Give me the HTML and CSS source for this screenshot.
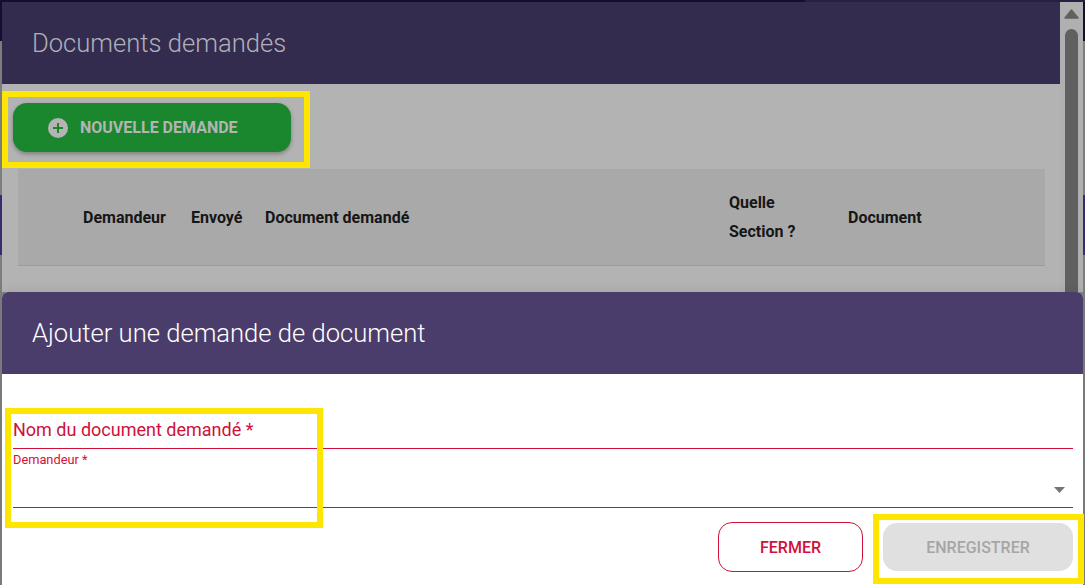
FILE: index.html
```html
<!DOCTYPE html>
<html>
<head>
    <meta charset="utf-8">
    <title>Documents demandés</title>
    <link rel="stylesheet" href="styles.css">
</head>
<body>
    <div class="sheet-back">
        <div class="back-main">
            <h2 class="back-title">Documents demandés</h2>
            <div class="back-content">
                <button class="btn-new">
                    <svg class="plus" viewBox="0 0 20 20" width="20" height="20">
                        <circle cx="10" cy="10" r="10" fill="#b4b4b4"/>
                        <path d="M10 5v10M5 10h10" stroke="#1a872e" stroke-width="2"/>
                    </svg>
                    <span>NOUVELLE DEMANDE</span>
                </button>
                <div class="table-head">
                    <span></span>
                    <span>Demandeur</span>
                    <span>Envoyé</span>
                    <span>Document demandé</span>
                    <span>Quelle<br>Section ?</span>
                    <span>Document</span>
                </div>
            </div>
        </div>
        <div class="scrollbar">
            <svg class="scroll-up" viewBox="0 0 15 10" width="15" height="10">
                <path d="M7.5 1L14 9H1z" fill="#606060" stroke="#606060" stroke-width="1.5" stroke-linejoin="round"/>
            </svg>
            <div class="scroll-thumb"></div>
        </div>
    </div>

    <div class="sheet-front">
        <h2 class="front-title">Ajouter une demande de document</h2>
        <div class="form">
            <div class="field-name">Nom du document demandé *</div>
            <div class="field-select">
                <label>Demandeur *</label>
                <svg class="caret" viewBox="0 0 11 6" width="11" height="6"><path d="M0 0h11L5.5 6z" fill="#757575"/></svg>
            </div>
            <div class="actions">
                <button class="btn-close">FERMER</button>
                <button class="btn-save" disabled>ENREGISTRER</button>
            </div>
        </div>
    </div>

    <div class="mark mark-new"></div>
    <div class="mark mark-fields"></div>
    <div class="mark mark-save"></div>
</body>
</html>
```

FILE: styles.css
```css
html, body {
    margin: 0;
    height: 585px;
    overflow: hidden;
}
body {
    position: relative;
    box-sizing: border-box;
    padding: 2px 2px 0;
    font-family: Roboto, "Liberation Sans", sans-serif;
    display: flex;
    flex-direction: column;
    background:
        linear-gradient(#272040, #272040) 805px 0 / 280px 2px no-repeat,
        linear-gradient(to bottom, #180c30 0 41px, #7d7d7d 41px 195px, #3a2a6e 195px 255px, #7d7d7d 255px);
}
h2 {
    margin: 0;
    font-weight: 300;
    font-size: 25.6px;
}
button {
    font-family: inherit;
    font-size: 16px;
    font-weight: 500;
    border-radius: 14px;
}

.sheet-back {
    height: 290px;
    display: flex;
    background: #b3b3b3;
}
.back-main {
    flex: 1;
}
.back-title {
    height: 82px;
    line-height: 82px;
    padding-left: 30px;
    background: #342c4f;
    color: #b1afb8;
}
.back-content {
    padding: 19px 15px 0 11px;
}
.btn-new {
    display: flex;
    align-items: center;
    gap: 12px;
    width: 278px;
    height: 49px;
    padding: 0 0 0 35px;
    border: 0;
    font-weight: 700;
    color: #b4b4b4;
    background: #1a872e;
    box-shadow: 0 2px 4px rgba(0, 0, 0, 0.3);
}
.table-head {
    display: grid;
    grid-template-columns: 65px 108px 74px 464px 119px 1fr;
    align-items: center;
    height: 96px;
    margin: 17px 0 0 5px;
    background: #a9a9a9;
    border-bottom: 1px solid #9b9b9b;
    color: #161616;
    font-size: 16px;
    font-weight: 700;
    line-height: 29px;
}
.scrollbar {
    width: 23px;
    display: flex;
    flex-direction: column;
    align-items: center;
    background: #b0b0b0;
}
.scroll-up {
    margin-top: 7px;
}
.scroll-thumb {
    width: 13px;
    flex: 1;
    margin-top: 10px;
    background: #606060;
    border-radius: 7px 7px 0 0;
}

.sheet-front {
    flex: 1;
    background: #fff;
    border-radius: 6px 6px 0 0;
    box-shadow: 0 -3px 8px rgba(0, 0, 0, 0.06);
}
.front-title {
    height: 82px;
    line-height: 82px;
    padding-left: 30px;
    background: #4b3d6b;
    color: #fff;
    border-radius: 6px 6px 0 0;
}
.form {
    padding: 0 10px 0 11px;
    color: #d0103a;
}
.field-name {
    height: 75px;
    box-sizing: border-box;
    padding-top: 45px;
    font-size: 18px;
    line-height: 22px;
    border-bottom: 1px solid #d0103a;
}
.field-select {
    position: relative;
    height: 58px;
    border-bottom: 1px solid #d0103a;
}
.field-select label {
    display: block;
    padding-top: 3px;
    font-size: 12.8px;
    line-height: 15px;
}
.caret {
    position: absolute;
    right: 8px;
    top: 38px;
}
.actions {
    display: flex;
    justify-content: flex-end;
    align-items: center;
    gap: 20px;
    margin-top: 14px;
}
.btn-close {
    width: 145px;
    height: 50px;
    background: #fff;
    color: #d0103a;
    border: 1px solid #d0103a;
}
.btn-save {
    width: 190px;
    height: 48px;
    background: #e0e0e0;
    color: #a6a6a6;
    border: 0;
}

/* yellow highlight boxes on top of the screenshot */
.mark {
    position: absolute;
    box-sizing: border-box;
    border: 6px solid #ffe600;
}
.mark-new {
    left: 2px;
    top: 91px;
    width: 308px;
    height: 77px;
}
.mark-fields {
    left: 5px;
    top: 408px;
    width: 318px;
    height: 120px;
}
.mark-save {
    left: 873px;
    top: 514px;
    width: 211px;
    height: 70px;
}
```
